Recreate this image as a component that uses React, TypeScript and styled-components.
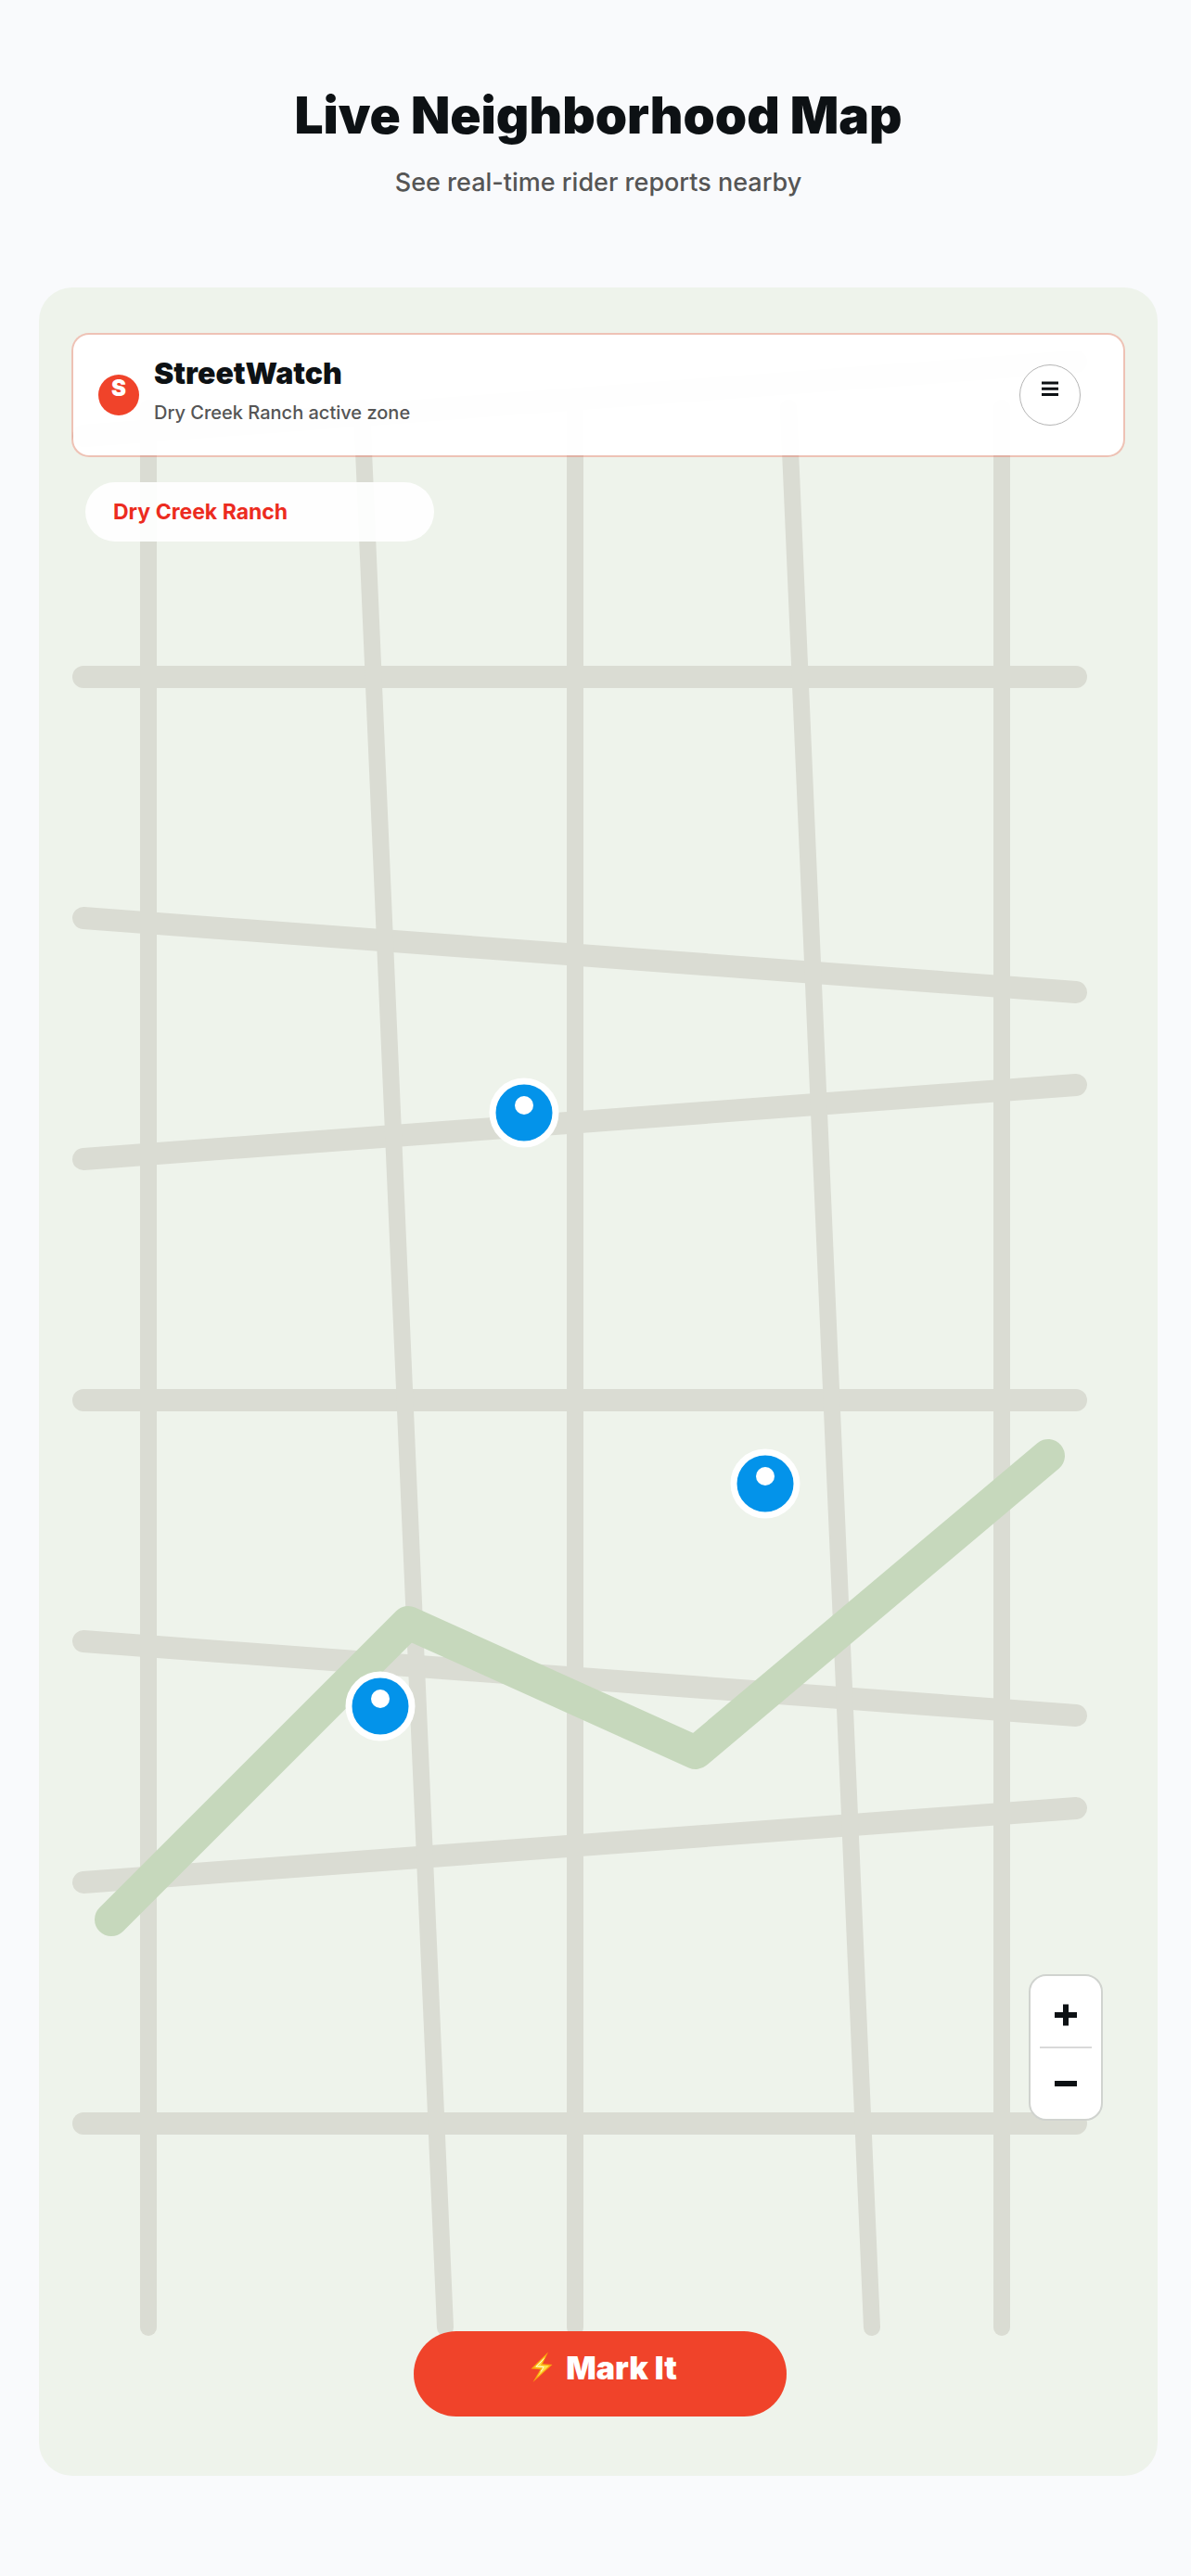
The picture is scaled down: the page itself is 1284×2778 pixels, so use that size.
import React from 'react';
import styled, { createGlobalStyle } from 'styled-components';

const COLOR_MAP = {
  page: '#f9fafc',
  land: '#eef3eb',
  road: '#dadcd3',
  park: '#c6d8bc',
  ink: '#0d1114',
  muted: '#555555',
  accent: '#f0432a',
  danger: '#ec2b20',
  pin: '#0393ea',
  white: '#ffffff',
};

const GlobalStyle = createGlobalStyle`
  * {
    box-sizing: border-box;
  }

  body {
    margin: 0;
    background-color: ${COLOR_MAP.page};
    color: ${COLOR_MAP.ink};
    font-family: Inter, 'Liberation Sans', sans-serif;
  }

  h1, h2, p {
    margin: 0;
  }

  button {
    font-family: inherit;
    color: inherit;
    cursor: pointer;
  }
`;

const Page = styled.main`
  padding: 90px 36px 108px 42px;
`;

const Intro = styled.header`
  display: flex;
  flex-direction: column;
  align-items: center;
  gap: 16px;
  margin-bottom: 90px;
  text-align: center;
`;

const Title = styled.h1`
  font-size: 55px;
  line-height: 68px;
  font-weight: 900;
`;

const Subtitle = styled.p`
  font-size: 27px;
  line-height: 46px;
  font-weight: 500;
  color: ${COLOR_MAP.muted};
`;

const Frame = styled.section`
  position: relative;
  display: flex;
  flex-direction: column;
  aspect-ratio: 1206 / 2360;
  padding: 49px 35px 64px;
  border-radius: 36px;
  overflow: hidden;
  background-color: ${COLOR_MAP.land};
`;

const Canvas = styled.svg`
  position: absolute;
  top: 0;
  left: 0;
  width: 100%;
  height: 100%;
`;

const Banner = styled.div`
  position: relative;
  display: flex;
  align-items: center;
  min-height: 134px;
  padding: 0 46px 0 27px;
  border: 2px solid rgba(240, 67, 42, 0.28);
  border-radius: 19px;
  background-color: rgba(255, 255, 255, 0.96);
  background-clip: padding-box;
`;

const Badge = styled.span`
  width: 44px;
  height: 44px;
  border-radius: 50%;
  background-color: ${COLOR_MAP.accent};
  color: ${COLOR_MAP.white};
  font-size: 24px;
  line-height: 29px;
  font-weight: 900;
  text-align: center;
`;

const BannerText = styled.div`
  flex: 1;
  margin-left: 16px;
  padding-bottom: 10px;
`;

const Name = styled.h2`
  font-size: 32px;
  line-height: 40px;
  font-weight: 900;
`;

const Zone = styled.p`
  margin-top: 8px;
  font-size: 20px;
  line-height: 28px;
  font-weight: 500;
  color: ${COLOR_MAP.muted};
`;

const MenuButton = styled.button`
  display: flex;
  justify-content: center;
  width: 66px;
  height: 66px;
  padding: 17px 0 0;
  border: 1px solid #b5b5b5;
  border-radius: 50%;
  background-color: ${COLOR_MAP.white};
`;

const Chip = styled.div`
  position: relative;
  width: 376px;
  height: 64px;
  margin: 27px 0 0 15px;
  padding-left: 30px;
  border-radius: 32px;
  background-color: rgba(255, 255, 255, 0.92);
  font-size: 23px;
  line-height: 64px;
  font-weight: 700;
  color: ${COLOR_MAP.danger};
`;

const ZoomGroup = styled.div`
  position: relative;
  display: flex;
  flex-direction: column;
  align-items: center;
  align-self: flex-end;
  width: 80px;
  margin: auto 24px 227px 0;
  border: 2px solid #d0d3cf;
  border-radius: 19px;
  background-color: rgba(255, 255, 255, 0.98);
`;

const ZoomButton = styled.button`
  display: flex;
  align-items: center;
  justify-content: center;
  width: 100%;
  height: 76px;
  padding: 0;
  border: 0;
  background: none;
`;

const Divider = styled.span`
  width: 56px;
  height: 2px;
  background-color: #d9d9d9;
`;

const MarkButton = styled.button`
  position: relative;
  align-self: center;
  display: flex;
  align-items: flex-start;
  justify-content: center;
  gap: 14px;
  width: 402px;
  height: 92px;
  margin-left: 4px;
  padding: 19px 0 0 8px;
  border: 0;
  border-radius: 46px;
  background-color: ${COLOR_MAP.accent};
  color: ${COLOR_MAP.white};
  font-size: 34px;
  line-height: 41px;
  font-weight: 900;
`;

// [start y, end y] of every street, left to right
const STREETS = [
  [470, 390],
  [730, 730],
  [990, 1070],
  [1250, 1170],
  [1510, 1510],
  [1770, 1850],
  [2030, 1950],
  [2290, 2290],
];

// [start x, end x] of every avenue, top to bottom
const AVENUES = [
  [160, 160],
  [390, 480],
  [620, 620],
  [850, 940],
  [1080, 1080],
];

const REPORTS = [
  { id: 'north', x: 565, y: 1200 },
  { id: 'east', x: 825, y: 1600 },
  { id: 'west', x: 410, y: 1840 },
];

function MapCanvas () :React.ReactElement {
  return (
    <Canvas viewBox="42 310 1206 2360" fill="none" aria-hidden="true">
      <g stroke={COLOR_MAP.road} strokeWidth="24" strokeLinecap="round">
        { STREETS.map(([from, to]) => <path key={from} d={`M90 ${from}L1160 ${to}`} />) }
      </g>
      <g stroke={COLOR_MAP.road} strokeWidth="18" strokeLinecap="round">
        { AVENUES.map(([from, to]) => <path key={from} d={`M${from} 440L${to} 2510`} />) }
      </g>
      <path
        d="M120 2070L440 1750L750 1890L1130 1570"
        stroke={COLOR_MAP.park}
        strokeWidth="36"
        strokeLinecap="round"
        strokeLinejoin="round"
      />
      { REPORTS.map(({ id, x, y }) => (
        <g key={id}>
          <circle cx={x} cy={y} r="34" fill={COLOR_MAP.pin} stroke={COLOR_MAP.white} strokeWidth="7" />
          <circle cx={x} cy={y - 8} r="10" fill={COLOR_MAP.white} />
        </g>
      )) }
    </Canvas>
  );
}

function BoltIcon () :React.ReactElement {
  return (
    <svg width="24" height="40" viewBox="0 -3 24 40" fill="none">
      <path d="M19 0.5L0.5 18.5L10.5 19.3L2.5 33L23.5 14L13 13.2Z" fill="#fba70f" />
      <path d="M16.5 4.5L4 17L13 17.6L7 27.5L20 15.3L10.8 14.6Z" fill="#ffe14a" />
      <path d="M14.5 7.5L6 16L14.2 16.6L11 21.5" stroke="#fffbd0" strokeWidth="1" />
    </svg>
  );
}

export default function App () :React.ReactElement {
  return (
    <>
      <GlobalStyle />
      <Page>
        <Intro>
          <Title>Live Neighborhood Map</Title>
          <Subtitle>See real-time rider reports nearby</Subtitle>
        </Intro>
        <Frame>
          <MapCanvas />
          <Banner>
            <Badge>S</Badge>
            <BannerText>
              <Name>StreetWatch</Name>
              <Zone>Dry Creek Ranch active zone</Zone>
            </BannerText>
            <MenuButton type="button" aria-label="Menu">
              <svg width="18" height="16" viewBox="0 0 18 16" fill={COLOR_MAP.ink}>
                <path d="M0 0.5H18V3.5H0ZM0 6.7H18V9.7H0ZM0 12.9H18V15.9H0Z" />
              </svg>
            </MenuButton>
          </Banner>
          <Chip>Dry Creek Ranch</Chip>
          <ZoomGroup>
            <ZoomButton type="button" aria-label="Zoom in">
              <svg width="24" height="32" viewBox="0 -8 24 32" fill={COLOR_MAP.ink}>
                <path d="M9 0.5H15V9H24V15H15V23.5H9V15H0V9H9Z" />
              </svg>
            </ZoomButton>
            <Divider />
            <ZoomButton type="button" aria-label="Zoom out">
              <svg width="24" height="24" viewBox="0 0 24 24" fill={COLOR_MAP.ink}>
                <path d="M0 9H24V15H0Z" />
              </svg>
            </ZoomButton>
          </ZoomGroup>
          <MarkButton type="button">
            <BoltIcon />
            Mark It
          </MarkButton>
        </Frame>
      </Page>
    </>
  );
}
